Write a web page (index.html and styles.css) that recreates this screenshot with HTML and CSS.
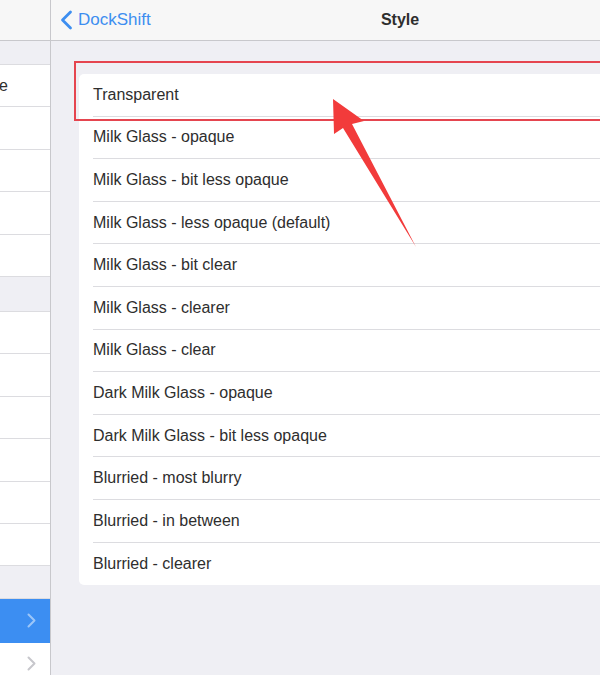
FILE: index.html
```html
<!DOCTYPE html>
<html lang="en">
<head>
  <meta charset="UTF-8">
  <meta name="viewport" content="width=device-width, initial-scale=1.0">
  <title>DockShift - Style</title>
  <link rel="stylesheet" href="styles.css">
</head>
<body>
  <div class="screen">
    <!-- 左侧设置列表（只露出右边一小段） -->
    <aside class="sidebar">
      <div class="side-nav"></div>
      <div class="side-gap"></div>
      <div class="side-group">
        <div class="side-row"><span class="side-label">Dock Style</span></div>
        <div class="side-row"></div>
        <div class="side-row"></div>
        <div class="side-row"></div>
        <div class="side-row"></div>
      </div>
      <div class="side-gap side-gap-mid"></div>
      <div class="side-group">
        <div class="side-row"></div>
        <div class="side-row"></div>
        <div class="side-row"></div>
        <div class="side-row"></div>
        <div class="side-row"></div>
        <div class="side-row"></div>
      </div>
      <div class="side-gap side-gap-low"></div>
      <div class="side-group">
        <div class="side-row side-row-active">
          <svg class="chevron" width="9" height="15" viewBox="0 0 9 15"><polyline points="1.5,1.5 7.5,7.5 1.5,13.5" /></svg>
        </div>
        <div class="side-row">
          <svg class="chevron" width="9" height="15" viewBox="0 0 9 15"><polyline points="1.5,1.5 7.5,7.5 1.5,13.5" /></svg>
        </div>
      </div>
    </aside>

    <!-- 右侧详情 -->
    <main class="detail">
      <header class="nav-bar">
        <a class="nav-back">
          <svg width="13" height="20" viewBox="0 0 13 20"><polyline points="10.5,2 2.5,10 10.5,18" /></svg>
          <span>DockShift</span>
        </a>
        <h1 class="nav-title">Style</h1>
      </header>

      <div class="content">
        <ul class="style-list">
          <li class="style-row">Transparent</li>
          <li class="style-row">Milk Glass - opaque</li>
          <li class="style-row">Milk Glass - bit less opaque</li>
          <li class="style-row">Milk Glass - less opaque (default)</li>
          <li class="style-row">Milk Glass - bit clear</li>
          <li class="style-row">Milk Glass - clearer</li>
          <li class="style-row">Milk Glass - clear</li>
          <li class="style-row">Dark Milk Glass - opaque</li>
          <li class="style-row">Dark Milk Glass - bit less opaque</li>
          <li class="style-row">Blurried - most blurry</li>
          <li class="style-row">Blurried - in between</li>
          <li class="style-row">Blurried - clearer</li>
        </ul>
      </div>

      <!-- 标注：红框 + 箭头 -->
      <div class="mark-box"></div>
    </main>

    <svg class="mark-arrow" width="600" height="675" viewBox="0 0 600 675">
      <polygon points="333,99 364,121 352,124 416,247 343,128 334,134" />
    </svg>
  </div>
</body>
</html>
```

FILE: styles.css
```css
* {
  box-sizing: border-box;
}

body {
  margin: 0;
  overflow: hidden;
  font-family: "Liberation Sans", Arial, sans-serif;
  color: #2e2e2e;
  background-color: #efeff4;
}

.screen {
  position: relative;
  display: flex;
  width: 749px;
  height: 675px;
}

/* 左侧列表 */
.sidebar {
  flex: none;
  width: 51px;
  overflow: hidden;
  background-color: #efeff4;
  border-right: 1px solid #c8c8cc;
}

.side-nav {
  height: 41px;
  background-color: #f7f7f7;
  border-bottom: 1px solid #c8c8cc;
}

.side-gap {
  height: 23px;
}

.side-gap-mid {
  height: 34px;
}

.side-gap-low {
  height: 32px;
}

.side-group {
  background-color: #fff;
  border-top: 1px solid #dcdce0;
}

.side-row {
  display: flex;
  justify-content: flex-end;
  align-items: center;
  height: 42.4px;
  padding-right: 14px;
  border-bottom: 1px solid #dcdce0;
  white-space: nowrap;
}

.side-label {
  margin-right: 28px;
  font-size: 16px;
}

.side-row-active {
  height: 44px;
  background-color: #3c8ef2;
  border-bottom-color: #3c8ef2;
}

.chevron polyline {
  fill: none;
  stroke: #c7c7cc;
  stroke-width: 2;
  stroke-linecap: round;
  stroke-linejoin: round;
}

.side-row-active .chevron polyline {
  stroke: #9cc6f8;
}

/* 右侧详情 */
.detail {
  position: relative;
  flex: 1;
  background-color: #efeff4;
}

.nav-bar {
  position: relative;
  display: flex;
  align-items: center;
  height: 41px;
  padding-left: 9px;
  background-color: #f7f7f7;
  border-bottom: 1px solid #c8c8cc;
}

.nav-back {
  display: flex;
  align-items: center;
  gap: 5px;
  color: #3d8ef0;
  font-size: 17px;
}

.nav-back polyline {
  fill: none;
  stroke: #3d8ef0;
  stroke-width: 2.8;
  stroke-linecap: round;
  stroke-linejoin: round;
}

.nav-title {
  position: absolute;
  left: 0;
  right: 0;
  margin: 0;
  text-align: center;
  font-size: 16px;
  font-weight: bold;
  color: #2e2e2e;
}

.content {
  padding: 33px 0 0 28px;
}

.style-list {
  margin: 0;
  padding: 0 0 0 14px;
  list-style: none;
  background-color: #fff;
  border-radius: 5px;
}

.style-row {
  display: flex;
  align-items: center;
  height: 42.6px;
  font-size: 16px;
  color: #2e2e2e;
  border-bottom: 1px solid #dcdce0;
}

.style-row:last-child {
  border-bottom: none;
}

/* 标注 */
.mark-box {
  position: absolute;
  top: 61px;
  left: 23px;
  right: -10px;
  height: 60px;
  border: 2px solid #e5454f;
}

.mark-arrow {
  position: absolute;
  top: 0;
  left: 0;
}

.mark-arrow polygon {
  fill: #f23b3b;
}
```
